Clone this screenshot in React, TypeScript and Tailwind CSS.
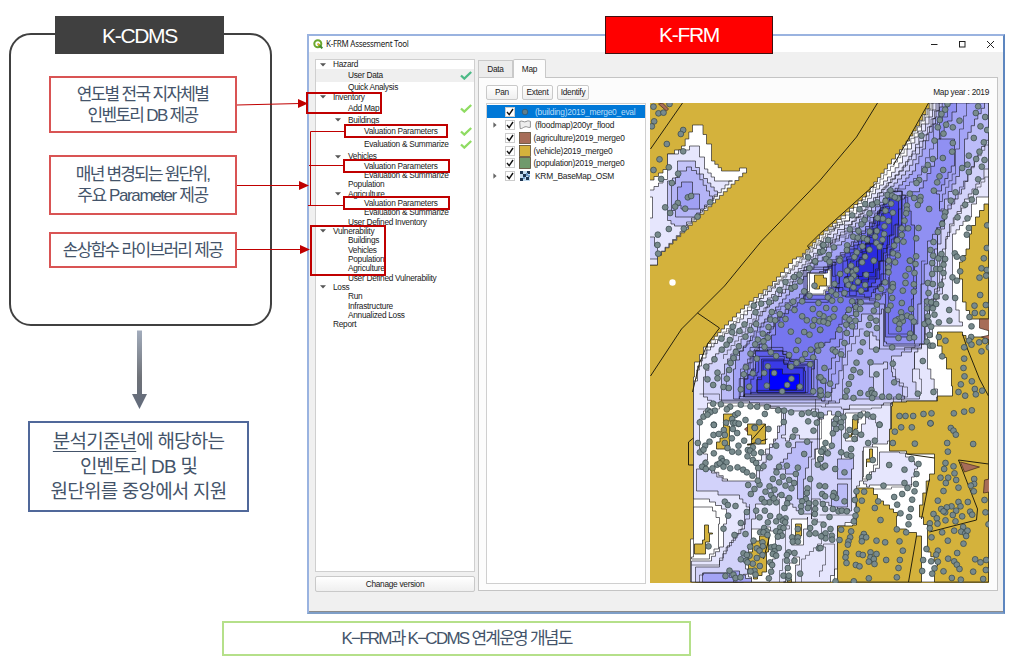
import React from "react";

type Pt = [number, number];

const parse = (s: string): Pt[] =>
  s.trim().split(/\s+/).map((p) => p.split(",").map(Number) as Pt);

/** Turns a coarse outline into the raster-like staircase of a flood grid. */
function stair(s: string, close = true, cell = 3.7): string {
  const pts = parse(s);
  if (close) pts.push(pts[0]);
  let d = `M${pts[0][0]} ${pts[0][1]}`;
  for (let i = 1; i < pts.length; i++) {
    const [x0, y0] = pts[i - 1];
    const [x1, y1] = pts[i];
    const n = Math.max(1, Math.round(Math.min(Math.abs(x1 - x0), Math.abs(y1 - y0)) / cell));
    for (let k = 1; k <= n; k++) {
      d += `H${(x0 + ((x1 - x0) * k) / n).toFixed(1)}V${(y0 + ((y1 - y0) * k) / n).toFixed(1)}`;
    }
  }
  return d + (close ? "Z" : "");
}

const FLOOD: [string, string][] = [
  // north-west basin
  ["#ffffff", "650,181 668,167 668,155 682,147 693,126 700,126 707,145 712,162 722,172 740,172 740,169 747,169 747,174 658,260 658,266 650,270"],
  ["#e6e6fd", "650,191 668,177 668,155 690,147 700,147 700,158 705,170 715,182 733,182 658,260 658,266 650,270"],
  ["#c4c4f8", "678,162 692,162 700,175 708,184 718,196 697,219 687,227 675,225 668,218 668,182 678,176"],
  ["#b4b4f6", "687,168 697,175 707,192 713,202 697,218 680,218 672,205 672,185 680,172"],
  ["#a0a0f4", "682,183 688,183 693,195 700,198 700,210 685,210 678,202 678,188"],
  ["#ffffff", "650,198 653,198 653,219 650,219"],
  ["#d0d0fa", "650,238 655,238 655,247 658,247 658,260 650,260"],
  // main body
  ["#ffffff", "933,104 920,127 910,142 900,155 888,170 878,183 867,198 850,213 833,228 820,240 803,258 797,260 773,287 745,310 725,330 708,348 700,363 695,378 694,393 694,540 691,541 691,583 989,583 989,104"],
  ["#e6e6fd", "937,104 922,132 912,150 903,164 892,178 880,190 868,204 850,222 835,232 806,260 776,289 760,303 744,320 725,338 711,351 702,367 698,382 694,400 694,500 710,503 722,510 727,525 724,548 712,562 692,565 692,583 827,583 835,570 838,527 853,520 857,487 863,477 863,452 873,445 888,442 891,404 900,402 937,398 938,390 928,360 928,338 933,327 963,323 953,287 953,255 953,235 967,218 972,205 977,198 989,195 989,104"],
  ["#d2d2fa", "940,104 926,132 916,152 906,168 896,180 882,194 870,208 852,226 838,235 810,262 780,292 764,306 748,324 730,345 716,358 706,378 704,398 716,408 780,412 784,425 776,442 770,455 760,480 728,482 712,470 697,470 697,492 740,500 750,512 745,530 730,548 720,568 696,570 696,583 740,583 752,560 752,520 756,505 778,495 790,505 800,515 812,520 812,500 838,510 850,512 852,470 842,460 842,425 838,415 850,406 884,404 920,396 913,370 915,353 925,335 930,310 943,290 943,250 950,225 965,200 980,180 989,160 989,104"],
  ["#bcbcf8", "943,104 930,135 920,155 910,172 898,184 884,197 872,212 856,228 840,240 814,264 786,294 770,308 752,330 738,350 728,365 722,385 722,402 750,404 822,404 840,400 905,397 903,387 893,373 892,357 922,345 928,310 935,290 938,245 945,215 962,190 975,160 989,135 989,104"],
  ["#a4a4f6", "946,104 936,125 926,150 916,172 903,186 888,199 876,212 860,229 842,246 818,266 790,296 776,312 758,332 744,352 736,370 734,400 822,402 836,385 846,345 862,315 882,310 884,347 920,345 925,300 935,250 938,220 945,200 960,170 965,140 975,120 985,104"],
  ["#9090f2", "957,104 940,112 940,140 955,142 955,167 942,192 937,195 940,212 945,222 933,242 928,265 915,345 887,343 885,305 862,300 850,325 840,348 832,370 826,398 745,398 745,370 760,345 775,322 800,295 824,268 845,250 862,232 878,214 890,200 920,189 935,160 938,140 948,122"],
  ["#7676ef", "884,200 905,198 915,240 915,275 917,290 914,338 890,338 886,295 876,300 860,300 846,318 836,340 820,350 815,370 812,394 752,394 752,370 768,350 776,322 802,300 820,275 846,252 866,230 878,212"],
  ["#5858ec", "888,197 902,197 902,228 895,250 888,262 884,285 872,298 846,297 832,280 832,266 850,250 868,234 878,214"],
  ["#3c3ce6", "890,200 899,200 899,226 890,246 884,262 880,280 868,292 850,288 845,278 848,260 866,244 878,222"],
  ["#2a2ae0", "866,245 884,245 882,262 876,278 862,284 856,268"],
  ["#5e5eec", "756,352 780,352 790,362 812,368 812,395 745,398 745,380 752,372"],
  ["#3a3ae6", "762,360 780,360 788,368 805,372 806,394 758,394 758,378"],
  ["#0000ff", "770,370 783,370 783,375 800,380 800,386 797,391 770,391"],
  // shallow pockets
  ["#ffffff", "708,404 760,406 782,413 782,427 778,440 770,450 758,467 757,482 728,480 715,470 702,467 708,455 700,445 700,420"],
  ["#ffffff", "694,508 713,512 720,525 719,550 710,560 692,558"],
  ["#d2d2fa", "870,333 880,345 880,350 870,348"],
  ["#d2d2fa", "870,365 884,363 888,370 884,373 884,398 872,398 874,378 870,378"],
  ["#ffffff", "808,274 828,270 832,288 826,296 808,294"],
  ["#ffffff", "792,520 808,518 808,530 804,546 792,546"],
  ["#ffffff", "794,558 800,558 800,566 796,583 784,583 786,570"],
  ["#ffffff", "752,530 764,528 778,536 776,560 770,583 752,578 746,562"],
  ["#ffffff", "846,414 862,412 866,425 858,442 846,440"],
  ["#ffffff", "864,448 878,448 878,466 870,480 863,478"],
  ["#e6e6fd", "880,453 900,454 912,462 918,470 912,486 870,488 864,482 868,476 880,466"],
  ["#bcbcf8", "796,443 813,443 812,458 806,480 804,500 798,500 798,475 786,470 774,470 784,460"],
  ["#bcbcf8", "838,485 848,485 848,508 832,512 832,500 838,498"],
  ["#bcbcf8", "838,460 852,456 854,470 852,480 838,476"],
  ["#a4a4f6", "703,574 728,572 740,576 752,583 708,583"],
  ["#ffffff", "820,420 828,412 836,420 832,450 820,466 816,450"],
  ["#e6e6fd", "786,412 812,410 820,420 818,440 800,436 790,442 782,436"],
];

const LAND = [
  "989,205 980,218 972,235 970,250 963,263 960,280 963,303 970,320 989,320",
  "989,338 970,340 963,333 943,333 938,347 947,370 952,387 953,397 938,398 938,402 907,403 893,407 892,430 890,452 907,455 935,459 935,475 930,482 920,518 928,533 928,553 938,567 935,583 989,583",
  "857,489 870,489 878,502 890,510 898,517 897,530 917,537 922,543 922,583 838,583 838,527 853,526 857,517",
  "724,415 730,415 734,422 728,427 730,440 730,450 720,450 717,443 724,435",
  "748,425 766,425 766,445 748,446 752,436",
  "705,526 709,526 709,534 713,535 710,543 706,555 695,553 695,545 703,541",
  "760,537 770,538 769,553 767,573 758,580 750,570 749,553 753,542",
  "796,525 802,525 802,537 795,537",
  "870,450 873,450 873,463 867,468 867,460",
  "853,420 859,420 858,430 852,438 848,436",
  "815,276 824,279 827,287 820,290 815,284",
  "788,580 792,580 792,583 788,583",
];

const LOOSE_CONTOURS = [
  "935,104 918,134 908,150 898,163 884,180 870,197 850,216 826,238 804,259 775,288 748,312 727,333 712,348 703,362 697,380",
  "942,104 928,136 916,155 904,172 891,184 876,203 857,222 833,244 812,264 783,294 757,320 739,342 724,360",
  "953,104 948,118 938,125 934,150 922,176 906,190 890,196",
  "970,104 964,130 960,150 956,175 946,195 940,210",
  "989,146 978,162 968,182 952,206 941,230 938,262",
  "989,178 974,198 958,220 948,240 946,280 934,306 926,328",
  "926,262 922,300 922,350 885,350 880,305 860,292",
  "911,262 914,300 912,335 893,335 889,300 889,278",
  "944,262 940,292 930,318 926,345 905,352",
  "890,192 900,192 906,200 906,232 900,252 892,268 890,290 876,304 850,304",
  "898,192 902,210 896,240 888,256 886,282 874,294",
  "700,395 720,395 720,401 802,401 822,402 836,404",
  "698,410 720,407 822,408 842,410 872,409 892,403",
  "727,392 727,370 740,352 753,338 768,318 790,300",
  "741,398 741,370 755,350 770,330 778,316",
  "844,350 836,375 832,402 826,408",
  "864,330 852,352 844,380 843,400",
  "829,230 850,218 870,214 890,206",
  "822,246 840,238 866,222 884,208",
  "894,403 894,398 908,398 908,388 900,380 896,370 894,360",
  "915,353 915,370 920,380 922,395",
  "812,500 812,460 818,440 822,420 816,400",
  "778,500 780,520 790,530 786,560 780,583",
  "812,520 824,526 822,545 806,560 802,583",
  "738,583 730,574 704,576 700,583",
  "692,566 716,566 724,552 736,536 746,520 750,505",
  "837,583 835,545 824,548 826,566 820,578",
  "820,516 854,516 856,490 892,488 912,485",
  "856,424 862,416 876,424 878,440",
];

const ROADS = [
  "M683 104L651 150",
  "M878 104L857 138L820 182L762 242L743 265L725 287L698 314L682 330L651 377",
  "M698 314L720 329L708 345L700 364L693 393",
  "M929 104L910 138L894 166M877 184L820 235L808 247L810 250",
  "M963 335L968 350L980 380L989 397",
  "M935 459L907 455M989 465L959 461L978 510L977 521L930 533M930 480L922 520",
  "M917 537L909 583",
  "M694 439L689 443V466H694M752 441L766 425M748 446L768 440M770 538L764 560",
];

/** Building markers, grouped per map tile: origin followed by positions in thirds of a pixel. */
const TILES: [number, number, string][] = [
  [645, 95, "27,38 42,58 57,56 75,30 29,82 22,97 116,108 109,120 67,150 116,172 45,196 73,220 101,239 27,228 50,255 82,267 130,310 140,306 100,327 92,338 122,344 62,340 77,357 197,325 159,368 73,405 118,404 40,422 39,453 41,479 535,454 527,474 491,490 512,503"],
  [820, 95, "384,30 377,47 366,60 361,78 380,92 400,100 420,80 355,100 372,119 345,140 306,125 400,147 398,173 370,192 340,195 325,213 316,228 371,228 360,247 353,265 299,258 291,267 343,290 476,37 469,57 497,69 483,97 503,108 463,132 493,145 480,173 448,185 470,195 495,198 487,218 444,212 428,222 448,234 476,256 469,294 457,317 408,295 394,320 437,332 414,370 444,373 448,402 442,422 213,289 204,303 218,305 235,313 226,310 198,321 215,329 173,325 158,332 137,330 120,346 98,364 150,358 198,350 220,356 262,335 262,347 260,358 255,380 271,299 284,312 303,309 302,320 295,333 329,345 190,374 174,372 207,381 135,378 126,391 91,406 117,411 151,413 172,411 195,397 194,420 101,428 115,431 133,432 143,437 167,428 189,437 171,447 247,403 266,403 297,402 247,423 233,439 252,443 290,433 377,355 375,368 368,390 355,414 342,444 180,458 150,467 129,457 112,475 83,454 82,468 43,460 12,453 26,438 10,472 28,483 20,495 62,495 105,489 137,488 163,500 221,478 235,484 290,487 271,500 224,455 333,468 341,485 357,493 366,480 377,495 406,478 412,488 430,493 503,394 502,462 493,493"],
  [645, 260, "328,140 350,134 374,130 393,118 405,93 423,69 449,54 465,47 495,28 512,7 333,160 382,159 406,165 378,182 392,184 372,204 410,197 423,180 430,142 446,128 473,127 450,153 441,88 451,83 479,97 467,67 510,80 495,110 522,132 505,150 473,172 487,184 510,183 525,187 505,200 527,213 495,227 479,219 461,245 439,218 300,196 265,203 263,220 285,216 318,213 303,233 335,195 355,224 370,236 340,242 357,247 360,264 332,256 318,284 337,299 379,280 395,291 434,288 455,273 499,272 519,260 521,275 482,285 506,295 473,302 456,312 497,316 440,323 231,239 256,243 246,257 232,272 283,262 274,279 267,297 258,312 210,301 185,323 254,333 304,325 370,322 389,342 359,342 325,343 298,346 219,341 219,358 247,359 189,361 206,378 237,384 253,387 289,391 314,383 367,380 428,378 441,359 466,383 413,397 524,355 535,365 506,397 527,394 527,410 206,434 229,436 257,443 247,451 289,437 318,442 338,443 367,444 401,454 419,455 440,460 361,465 191,455 211,455 197,460 177,473 189,467 272,468 280,463 166,490 208,497 245,491 263,480 266,492 303,483 282,495 344,490 330,505 418,489 472,465 492,461 510,465 525,468 491,487 517,491"],
  [820, 260, "30,8 60,5 95,20 128,10 163,5 208,5 227,10 207,25 207,40 272,5 288,15 268,30 285,42 258,50 338,12 372,17 350,30 338,45 362,30 372,42 399,55 412,65 422,37 486,28 502,33 480,56 500,50 83,35 100,40 62,45 110,32 103,50 140,47 95,60 115,68 80,65 45,75 87,78 137,78 102,85 125,95 75,102 36,97 50,107 25,115 63,123 38,125 20,147 45,150 12,172 30,180 42,173 25,193 0,165 12,188 2,212 60,212 88,152 98,127 124,130 110,145 122,150 110,165 78,175 90,182 108,185 80,197 98,202 75,252 82,222 197,70 220,75 185,90 213,95 220,85 176,115 218,117 172,137 213,140 205,153 163,155 170,185 153,177 148,198 172,207 142,224 130,250 250,95 258,72 283,76 283,98 247,132 275,150 245,160 263,170 237,180 228,185 250,186 275,175 240,195 238,210 283,188 272,224 237,237 270,237 284,235 247,175 325,72 340,75 365,77 327,102 378,115 407,117 350,112 323,128 335,130 350,135 323,148 340,148 345,167 389,153 325,172 390,185 358,190 315,195 327,188 335,203 482,108 465,140 499,138 466,162 489,162 450,174 456,202 455,234 330,228 358,234 322,248 332,260 340,260 378,245 449,245 456,257 479,250 497,246 508,265 486,277 434,265 368,292 434,299 432,327 435,352 424,376 457,367 466,390 469,406 488,395 417,399 437,410 310,306 218,265 170,272 122,278 40,272 48,278 65,286 5,258 153,310 111,311 15,327 122,340 102,333 95,354 220,314 171,346 224,370 88,375 12,365 3,355 32,374 82,395 156,393 122,402 147,405 158,402 165,405 158,417 102,417 78,413 188,413 209,413 238,413 295,404 342,399 25,407 5,407 3,395 240,471 258,471 281,471 312,465 336,463 403,463 434,458 457,454 333,493 180,497 56,465 72,475 5,468 50,480 108,475 123,468 144,467 161,473"],
  [645, 420, "208,18 238,33 265,30 273,12 283,14 160,72 182,80 195,68 207,48 223,45 241,48 278,42 262,58 299,65 241,72 282,80 249,87 263,98 282,100 166,100 177,92 208,103 231,118 235,127 246,130 183,132 173,143 184,150 204,148 218,137 226,133 237,143 257,148 279,145 296,152 307,160 324,170 331,27 372,30 341,67 325,85 310,93 317,95 309,112 350,100 328,103 325,123 335,132 341,147 357,142 375,115 395,80 432,77 445,53 452,34 507,35 479,105 488,68 533,98 527,120 520,137 535,145 404,143 427,140 460,146 454,165 396,160 385,180 415,173 404,190 434,183 449,192 423,200 441,208 375,202 390,212 363,218 345,197 340,185 330,210 319,225 311,198 380,228 411,228 434,237 428,253 420,267 395,250 375,250 352,240 360,250 388,238 497,180 489,208 487,222 525,200 533,225 484,240 473,247 493,253 513,252 470,262 490,267 512,270 470,278 511,285 307,279 335,275 361,275 345,295 377,291 395,307 405,293 423,298 415,305 422,310 407,325 417,327 370,310 359,327 367,337 395,337 407,340 412,350 400,353 241,248 250,258 273,261 251,290 289,312 237,329 270,348 303,345 347,340 357,340 369,348 192,382 327,365 317,383 337,388 354,370 355,382 345,395 354,408 337,417 315,410 297,403 307,408 289,421 305,425 325,434 346,441 380,385 390,383 403,387 390,397 385,405 395,410 377,430 383,438 380,458 373,478 330,455 318,457 333,467 309,430 255,455 267,467 243,471 273,477 288,475 433,400 427,408 450,402 450,425 427,425 430,447 467,464 417,470 432,477 433,470 443,355 445,368 460,330 460,355 460,368 497,327 510,310 513,343 495,345 523,388 535,350"],
  [820, 420, "180,17 245,25 277,25 226,38 333,13 394,27 402,35 409,47 220,72 286,74 383,72 385,98 461,75 45,15 65,10 65,25 40,43 50,30 90,33 108,40 80,50 125,47 105,60 146,72 166,65 18,72 37,80 12,90 5,98 25,103 3,120 17,140 47,150 75,160 65,100 82,107 95,90 95,110 160,123 148,174 209,138 255,152 276,120 297,135 291,165 255,192 289,195 264,207 285,217 248,225 192,200 224,234 278,242 233,257 274,270 243,283 269,294 267,316 232,331 260,340 111,217 134,218 106,243 127,245 176,247 166,267 183,303 112,272 108,290 103,307 17,202 17,232 43,222 50,237 40,232 10,255 17,270 40,270 57,277 67,275 75,247 82,277 30,294 12,317 33,330 65,332 18,343 18,358 5,352 37,350 60,363 38,362 95,337 92,355 87,367 85,377 133,345 128,355 140,355 127,367 171,365 197,370 240,367 250,395 118,405 130,408 153,400 171,405 153,415 148,428 163,420 165,435 200,423 241,423 80,402 78,415 81,432 109,438 120,442 237,447 232,475 148,478 103,487 48,487 3,387 378,132 402,142 374,150 405,163 363,176 386,176 410,183 379,192 417,206 372,216 464,180 464,195 454,200 463,217 355,245 417,249 445,249 423,262 396,262 382,265 365,270 377,280 372,277 410,275 400,288 342,285 352,298 378,304 428,292 452,278 458,287 354,314 408,307 331,313 331,328 368,340 404,335 431,324 425,338 437,343 444,335 440,351 336,355 385,365 432,374 321,390 355,395 350,407 413,402 311,423 335,427 355,428 386,419 404,427 412,437 420,450 461,458 467,421 483,430 500,423 499,453 308,456 345,448 338,464 372,457 397,477 424,482 491,480 495,243 498,280 507,316"],
];

const PEAKS: [number, number, string, number[]][] = [
  [783, 382, "756,354 780,354 790,364 812,368 812,395 747,397 747,380 754,372", [0.72, 0.88, 1.08, 1.2]],
  [818, 283, "808,272 828,268 834,288 826,298 806,295", [0.8, 1.15, 1.35]],
  [868, 262, "888,200 899,200 899,230 888,262 880,285 858,293 840,282 846,262 866,240", [0.5, 0.78, 1.12]],
];

function FloodMap() {
  return (
    <svg className="block h-[480px] w-[339px] shrink-0 bg-[#d4b23c]" viewBox="650.5 104 339 480">
      {FLOOD.map(([fill, p], i) => (
        <path key={i} d={stair(p)} fill={fill} stroke="#1c1c24" strokeOpacity="0.85" strokeWidth="0.75" />
      ))}
      {LOOSE_CONTOURS.map((p, i) => (
        <path key={i} d={stair(p, false)} fill="none" stroke="#1c1c24" strokeOpacity="0.75" strokeWidth="0.7" />
      ))}
      {PEAKS.map(([cx, cy, p, scales]) =>
        scales.map((s) => (
          <path
            key={`${cx}-${s}`}
            d={stair(parse(p).map(([x, y]) => `${cx + (x - cx) * s},${cy + (y - cy) * s}`).join(" "))}
            fill="none"
            stroke="#14142a"
            strokeOpacity="0.8"
            strokeWidth="0.75"
          />
        ))
      )}
      {LAND.map((p, i) => (
        <path key={i} d={stair(p)} fill="#d4b23c" stroke="#2c2814" strokeWidth="0.8" />
      ))}
      <g fill="#a76d58" stroke="#40261c" strokeWidth="0.7">
        <path d="M980 320H990V332L980 329Z" />
        <path d="M982 338L990 336V341Z" />
        <path d="M961 463L980 468L965 473Z" />
        <path d="M985 481L990 480V493L984 494Z" />
        <path d="M659 105L663 104L669 110L667 112Z" />
        <path d="M745 430L748 428V433Z" />
      </g>
      {ROADS.map((d, i) => (
        <path key={i} d={d} fill="none" stroke="#26220f" strokeWidth="1" />
      ))}
      <g fill="#788a8c" stroke="#36464a" strokeWidth="0.7">
        {TILES.map(([ox, oy, s]) =>
          parse(s).map(([x, y], i) => <circle key={`${ox}-${oy}-${i}`} cx={ox + x / 3} cy={oy + y / 3} r="2.9" />)
        )}
      </g>
      <circle cx="673" cy="283.5" r="3.2" fill="#fff" />
    </svg>
  );
}

type Row = { t: string; lv: 0 | 1 | 2; h?: string; open?: boolean; check?: string; hl?: boolean };

const ROWS: Row[] = [
  { t: "Hazard", lv: 0, h: "h-[9px]", open: true },
  { t: "User Data", lv: 1, h: "h-[13px]", check: "#4dba87", hl: true },
  { t: "Quick Analysis", lv: 1, h: "h-[10px]" },
  { t: "Inventory", lv: 0, h: "h-[10px]", open: true },
  { t: "Add Map", lv: 1, h: "h-[12px]", check: "#8fdc62" },
  { t: "Buildings", lv: 1, h: "h-[12px]", open: true },
  { t: "Valuation Parameters", lv: 2, h: "h-[11px]", check: "#8fdc62" },
  { t: "Evaluation & Summarize", lv: 2, h: "h-[15px]", check: "#8fdc62" },
  { t: "Vehicles", lv: 1, h: "h-[9px]", open: true },
  { t: "Valuation Parameters", lv: 2 },
  { t: "Evaluation & Summarize", lv: 2 },
  { t: "Population", lv: 1 },
  { t: "Agriculture", lv: 1, open: true },
  { t: "Valuation Parameters", lv: 2 },
  { t: "Evaluation & Summarize", lv: 2 },
  { t: "User Defined Inventory", lv: 1 },
  { t: "Vulnerability", lv: 0, open: true },
  { t: "Buildings", lv: 1 },
  { t: "Vehicles", lv: 1 },
  { t: "Population", lv: 1 },
  { t: "Agriculture", lv: 1 },
  { t: "User Defined Vulnerability", lv: 1 },
  { t: "Loss", lv: 0, open: true },
  { t: "Run", lv: 1 },
  { t: "Infrastructure", lv: 1 },
  { t: "Annualized Loss", lv: 1 },
  { t: "Report", lv: 0 },
];

const INDENT = ["pl-[4px]", "pl-[19px]", "pl-[35px]"];

function TreeRow({ t, lv, h = "h-[9.35px]", open, check, hl }: Row) {
  return (
    <li className={`flex shrink-0 items-center whitespace-nowrap pr-[2px] ${INDENT[lv]} ${h} ${hl ? "bg-[#efefef]" : ""}`}>
      <span className="flex w-[13px] shrink-0">
        {open && (
          <svg className="h-[4px] w-[6px]" viewBox="0 0 6 4">
            <path d="M0 0.3H6L3 3.6Z" fill="#555" />
          </svg>
        )}
      </span>
      <span className="flex-1 leading-none">{t}</span>
      {check && (
        <svg className="h-[9px] w-[12px]" viewBox="0 0 12 9">
          <path d="M1 4.5L4.3 7.6L11.2 1" fill="none" stroke={check} strokeWidth="2.3" />
        </svg>
      )}
    </li>
  );
}

const LAYERS = [
  { t: "(building)2019_merge0_eval", kind: "dot", exp: false, h: "h-[13px]" },
  { t: "(floodmap)200yr_flood", kind: "area", exp: true, h: "h-[14px]" },
  { t: "(agriculture)2019_merge0", kind: "#a76d58", exp: false, h: "h-[12.5px]" },
  { t: "(vehicle)2019_merge0", kind: "#d4b23c", exp: false, h: "h-[12.5px]" },
  { t: "(population)2019_merge0", kind: "#709a6c", exp: false, h: "h-[12.5px]" },
  { t: "KRM_BaseMap_OSM", kind: "raster", exp: true, h: "h-[13px]" },
];

function LayerIcon({ kind }: { kind: string }) {
  return (
    <svg className="h-[12px] w-[12px] shrink-0" viewBox="0 0 12 12">
      {kind === "dot" && <circle cx="6" cy="6" r="2.8" fill="#5f7f8c" stroke="#34566e" strokeWidth="0.8" />}
      {kind === "area" && (
        <path d="M0.7 2.5C3 1 5 3.8 7 2.6S10 2 11.4 2.4V8.3C9 9 8 7.2 6 7.8S3 10 1.2 9.6Z" fill="#eee" stroke="#777" strokeWidth="0.8" />
      )}
      {kind.startsWith("#") && <rect x="0.5" y="0.5" width="11" height="11" fill={kind} stroke="#5c4b34" strokeWidth="0.8" />}
      {kind === "raster" && (
        <g>
          <rect x="1" y="1" width="10" height="10" fill="#c4dcf0" />
          <path d="M1 1H4V4H1ZM4 4H7V7H4ZM8 1H11V4H8ZM1 8H4V11H1ZM7 7H10V10H7Z" fill="#1d3450" />
          <path d="M7 3H9V6H7ZM4 7H6V9H4ZM9 5H11V7H9Z" fill="#6f9cc8" />
        </g>
      )}
    </svg>
  );
}

function LayerRow({ t, kind, exp, h }: (typeof LAYERS)[number]) {
  const active = kind === "dot";
  return (
    <li className={`flex items-center whitespace-nowrap ${h} ${active ? "bg-[#0078d7] text-[#b9dcf8]" : ""}`}>
      <span className="flex w-[18px] shrink-0 justify-center pr-[2px]">
        {exp && (
          <svg className="h-[6px] w-[4px]" viewBox="0 0 4 6">
            <path d="M0.4 0.2L3.6 3L0.4 5.8Z" fill="#666" />
          </svg>
        )}
      </span>
      <svg className="mr-[4px] h-[10px] w-[10px] shrink-0" viewBox="0 0 10 10">
        <rect x="0.5" y="0.5" width="9" height="9" fill="#fff" stroke="#ccc" />
        <path d="M2 5L4.2 7.6L8 2" fill="none" stroke="#111" strokeWidth="1.4" />
      </svg>
      <LayerIcon kind={kind} />
      <span className={`leading-[12px] ${kind.startsWith("#") ? "pl-[2.5px]" : "pl-[4px]"}`}>{t}</span>
    </li>
  );
}

const BTN =
  "flex items-center justify-center rounded-[2px] border border-[#c9c9c9] bg-linear-to-b from-white to-[#efefef] leading-none";

function Toolwindow() {
  return (
    <section className="flex h-[580px] w-[698px] flex-col border-2 border-r-[#5d86bf] border-b-[#7f9fc8] border-l-[#9ab3e0] border-t-[#9ab3e0] bg-[#f0f0f0] font-['Liberation_Sans',sans-serif] text-[8.3px] tracking-[-0.28px] text-[#1a1a1a]">
      <header className="flex h-[16px] shrink-0 items-center bg-white pl-[4px]">
        <svg className="h-[10px] w-[10px]" viewBox="0 0 10 10">
          <circle cx="4.8" cy="4.8" r="3.5" fill="none" stroke="#6ba82f" strokeWidth="2" />
          <path d="M5 5L9.3 9.3" stroke="#3f8c2f" strokeWidth="2" />
          <path d="M4.5 4.5L6.5 6.5" stroke="#e6b422" strokeWidth="1.6" />
        </svg>
        <h1 className="flex-1 pl-[3px] font-['Noto_Sans',sans-serif] text-[8px] leading-none">K-FRM Assessment Tool</h1>
        <svg className="mr-[8px] h-[8px] w-[66px]" viewBox="0 0 66 8" fill="none" stroke="#222" strokeWidth="1">
          <path d="M2 4.500H8.500M58 1L65 8M65 1L58 8" />
          <rect x="30.500" y="1.500" width="5.500" height="5.500" />
        </svg>
      </header>
      <div className="flex min-h-0 flex-1 pl-[6px] pt-[7px]">
        <div className="flex w-[160px] flex-col">
          <ul className="flex h-[513px] flex-col overflow-hidden border border-[#cfcfcf] bg-white">
            {ROWS.map((r, i) => (
              <TreeRow key={i} {...r} />
            ))}
          </ul>
          <button className={`mt-[4px] h-[16px] ${BTN}`}>Chanage version</button>
        </div>
        <div className="ml-[3px] flex w-[520px] flex-col">
          <nav className="z-10 -mb-px flex h-[19px] items-end">
            <span className="flex h-[18px] w-[35px] items-center justify-center border border-[#c9c9c9] bg-[#ececec]">Data</span>
            <span className="flex h-[19px] w-[33px] items-center justify-center rounded-t-[2px] border border-b-0 border-[#c9c9c9] bg-[#fcfcfc]">Map</span>
          </nav>
          <div className="flex h-[514px] flex-col border border-[#c4c4c4] bg-[#fcfcfc] pl-[7px] pr-[8px] pt-[6px]">
            <div className="flex h-[16px] items-center gap-[4px]">
              <button className={`h-[15px] w-[32px] ${BTN}`}>Pan</button>
              <button className={`h-[15px] w-[31px] ${BTN}`}>Extent</button>
              <button className={`h-[15px] w-[32px] ${BTN}`}>Identify</button>
              <span className="ml-auto">Map year : 2019</span>
            </div>
            <div className="mt-[3px] flex justify-between">
              <ul className="h-[481px] w-[160px] border border-[#cfcfcf] bg-white pt-px text-[8.4px] tracking-[-0.22px]">
                {LAYERS.map((l) => (
                  <LayerRow key={l.t} {...l} />
                ))}
              </ul>
              <FloodMap />
            </div>
          </div>
        </div>
      </div>
      <div className="h-px shrink-0 bg-[#8c8c8c]" />
    </section>
  );
}

const NOTE =
  "flex w-[188px] flex-col items-center justify-center whitespace-nowrap border-2 border-[#d95454] bg-white text-center";

function Connectors() {
  return (
    <svg className="pointer-events-none absolute inset-0 z-20 h-[665px] w-[1017px]" viewBox="0 0 1017 665" fill="none">
      <defs>
        <linearGradient id="down" x1="0" y1="330" x2="0" y2="409" gradientUnits="userSpaceOnUse">
          <stop offset="0" stopColor="#a3adbd" />
          <stop offset="0.6" stopColor="#6f7278" />
          <stop offset="1" stopColor="#626b7c" />
        </linearGradient>
      </defs>
      <g stroke="#c00000" strokeWidth="1">
        <path d="M237 105L300 103.500M237 185.500H301M237 249.500H302" />
        <path d="M345 131.500H310.500V206M309 165.500H345M308 205.500H344" />
      </g>
      <g fill="#c00000">
        <path d="M298 99L308 103.500L298 108ZM299 181L309 185.500L299 190ZM300 245L310 249.500L300 254Z" />
      </g>
      <g stroke="#c00000" strokeWidth="2">
        <rect x="307" y="93" width="74" height="20" />
        <rect x="345" y="125" width="102" height="12" />
        <rect x="344" y="160" width="105" height="12" />
        <rect x="344" y="197" width="105" height="12" />
        <rect x="311" y="226" width="74" height="49" />
      </g>
      <path d="M137 330.500H142V394H147L139.500 409L132 394H137Z" fill="url(#down)" />
    </svg>
  );
}

export default function App() {
  return (
    <main className="relative flex h-[665px] w-[1017px] flex-col overflow-hidden bg-white font-['Liberation_Sans','Noto_Sans_CJK_KR',sans-serif] text-[#44546a]">
      <div className="flex h-[614px] shrink-0">
        <aside className="w-[307px] shrink-0 pl-[9px] pt-[33px]">
          <section className="relative flex h-[293px] w-[263px] flex-col items-center rounded-[22px] border-2 border-[#404040] pl-[4px] pt-[41px] text-[17px] leading-[21px]">
            <h2 className="absolute left-[44px] top-[-19px] flex h-[38px] w-[169px] items-center justify-center bg-[#404040] text-[21px] tracking-[-1.3px] text-white">
              K-CDMS
            </h2>
            <p className={`h-[57px] tracking-[-1.7px] ${NOTE}`}>
              <span>연도별 전국 지자체별</span>
              <span>인벤토리 DB 제공</span>
            </p>
            <p className={`mt-[22px] h-[60px] ${NOTE}`}>
              <span className="tracking-[-1.8px]">매년 변경되는 원단위,</span>
              <span className="tracking-[-1.4px]">주요 Parameter 제공</span>
            </p>
            <p className={`mt-[17px] h-[36px] tracking-[-1.7px] ${NOTE}`}>손상함수 라이브러리 제공</p>
          </section>
          <p className="ml-[19px] mt-[95px] flex h-[91px] w-[221px] flex-col items-center justify-center whitespace-nowrap border-2 border-[#50689a] text-[19px] leading-[25px] tracking-[-0.8px]">
            <span>
              <u className="underline-offset-[3px]">분석기준년</u>에 해당하는
            </span>
            <span>인벤토리 DB 및</span>
            <span>원단위를 중앙에서 지원</span>
          </p>
        </aside>
        <div className="relative pt-[34px]">
          <Toolwindow />
          <h2 className="absolute left-[298px] top-[16px] z-10 flex h-[38px] w-[168px] items-center justify-center border border-[#401010] bg-[#ff0000] text-[21px] tracking-[-1.3px] text-white">
            K-FRM
          </h2>
        </div>
      </div>
      <footer className="ml-[222px] mt-[7px] flex h-[35px] w-[469px] items-center justify-center whitespace-nowrap border-2 border-[#b5e08a] text-[17px] tracking-[-1.75px]">
        K−FRM과 K−CDMS 연계운영 개념도
      </footer>
      <Connectors />
    </main>
  );
}
